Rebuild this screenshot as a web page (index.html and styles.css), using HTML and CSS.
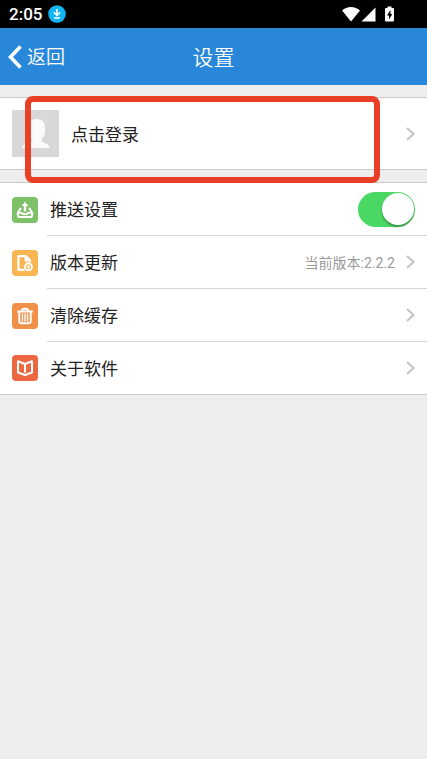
FILE: index.html
```html
<!DOCTYPE html>
<html lang="zh-CN">
<head>
<meta charset="utf-8">
<meta name="viewport" content="width=device-width, initial-scale=1">
<title>设置</title>
<link rel="stylesheet" href="styles.css">
</head>
<body>
<div class="status">
  <span class="clock">2:05</span>
  <svg class="download" viewBox="0 0 18 18" width="18" height="18" aria-hidden="true"><circle cx="9" cy="9" r="8.8" fill="#12b5f5"/><path d="M9 4v6M5.800 7.200 9 10.400l3.200-3.200M6 13h6" fill="none" stroke="#fff" stroke-width="1.600"/></svg>
  <svg class="signals" viewBox="0 0 54 18" width="54" height="18" aria-hidden="true">
    <path d="M1 5.500C6 .8 14 .8 19 5.500L10 16.500z" fill="#fff"/>
    <path d="M34.500 2.500v14H20.500z" fill="#fff"/>
    <path d="M46.500 1.500h4v1.500h1.500q1 0 1 1v11.500q0 1-1 1h-7q-1 0-1-1V4q0-1 1-1h1.500z" fill="#fff"/>
    <path d="M49.500 5 46 10.500h2V14.500l3.300-5.500h-1.800z" fill="#000"/>
  </svg>
</div>
<header class="header">
  <button class="back" type="button"><svg viewBox="0 0 14 24" width="14" height="24" aria-hidden="true"><path d="M12.500 1.500 2.500 12l10 10.500" fill="none" stroke="#fff" stroke-width="3.600"/></svg><span class="back-text">返回</span></button>
  <h1 class="title">设置</h1>
</header>
<main class="content">
  <section class="panel account">
    <a class="login" href="#login">
      <svg class="avatar" viewBox="0 0 47 47" width="47" height="47" aria-hidden="true"><rect width="47" height="47" rx="1" fill="#d8d8d8"/><path d="M10 38c.5-3 3-4.500 8-6 2-.6 2.300-2.500 1.300-4-1.500-2-2.300-4-2.300-7C16 13 19 9 24.500 9c6 0 8.500 3.500 8.300 8.500 0 1.500.7 3 .2 5-.3 2.500-1.500 4.500-3 6-.6 2-.3 3.200 1.500 3.900 4 1.300 5.500 2.300 6 5.600z" fill="#fafafa"/></svg>
      <span class="label">点击登录</span>
      <svg class="chevron" viewBox="0 0 9 14" width="9" height="14" aria-hidden="true"><path d="M1 1l6.500 6L1 13"/></svg>
    </a>
    <div class="marker"></div>
  </section>
  <ul class="panel list">
    <li class="item">
      <svg class="icon" viewBox="0 0 26 26" width="26" height="26" aria-hidden="true"><rect width="26" height="26" rx="4" fill="#7fc169"/><path d="M9.300 11.300 8 12Q5.700 15 5.700 17.200q0 2.900 2.600 2.900h9.400q2.600 0 2.600-2.900 0-2.200-2.300-5.200l-1.300-.7M6.500 15.800h3q.8 1.500 3.500 1.500t3.500-1.500h3" fill="none" stroke="#fff" stroke-width="2" stroke-linejoin="round"/><path d="M13 14.500V8" stroke="#fff" stroke-width="2.400"/><path d="M13 4.800 16.500 9h-7z" fill="#fff"/></svg>
      <label class="row" for="push"><span class="label">推送设置</span><input class="switch" id="push" type="checkbox" role="switch" checked></label>
    </li>
    <li class="item">
      <svg class="icon" viewBox="0 0 26 26" width="26" height="26" aria-hidden="true"><rect width="26" height="26" rx="4" fill="#f8b551"/><path d="M12.500 19.800H6.400V6.200h7.600l4 4V12" fill="none" stroke="#fff" stroke-width="2.200" stroke-linejoin="round"/><path d="M12.500 5.500V11.500h6z" fill="#fff"/><circle cx="16.500" cy="16.800" r="3.500" fill="#f8b551" stroke="#fff" stroke-width="1.900"/><path d="M16.500 15v3.600M14.700 16.800h3.600" stroke="#fff" stroke-width="1.200"/></svg>
      <a class="row" href="#update"><span class="label">版本更新</span><span class="version">当前版本:2.2.2</span><svg class="chevron" viewBox="0 0 9 14" width="9" height="14" aria-hidden="true"><path d="M1 1l6.500 6L1 13"/></svg></a>
    </li>
    <li class="item">
      <svg class="icon" viewBox="0 0 26 26" width="26" height="26" aria-hidden="true"><rect width="26" height="26" rx="4" fill="#f19149"/><g fill="none" stroke="#fff"><path d="M5.200 8.500h15.600M9.800 8V7.300q0-1.500 3.200-1.500T16.200 7.300V8" stroke-width="2"/><path d="M7.300 9v9q0 2.200 2.200 2.200h7q2.200 0 2.200-2.200V9" stroke-width="2"/><path d="M10.500 10.500v8M13 10.500v8M15.500 10.500v8" stroke-width="1.300"/></g></svg>
      <a class="row" href="#cache"><span class="label">清除缓存</span><svg class="chevron" viewBox="0 0 9 14" width="9" height="14" aria-hidden="true"><path d="M1 1l6.500 6L1 13"/></svg></a>
    </li>
    <li class="item">
      <svg class="icon" viewBox="0 0 26 26" width="26" height="26" aria-hidden="true"><rect width="26" height="26" rx="4" fill="#eb6841"/><path d="M13 9 6 6.300v11.200l7 2.500 7-2.500V6.300zv8.500" fill="none" stroke="#fff" stroke-width="2" stroke-linejoin="round"/></svg>
      <a class="row" href="#about"><span class="label">关于软件</span><svg class="chevron" viewBox="0 0 9 14" width="9" height="14" aria-hidden="true"><path d="M1 1l6.500 6L1 13"/></svg></a>
    </li>
  </ul>
</main>
</body>
</html>
```
FILE: styles.css
```css
* {
  box-sizing: border-box;
}

body {
  margin: 0;
  min-height: 100vh;
  background: #ededed;
  color: #222;
  font-family: Roboto, "Noto Sans CJK SC", sans-serif;
  font-size: 17px;
}

a {
  color: inherit;
  text-decoration: none;
}

.status {
  display: flex;
  align-items: center;
  gap: 6px;
  height: 28px;
  padding: 0 32px 0 9px;
  background: #000;
  color: #fff;
}

.clock {
  font-weight: 500;
}

.signals {
  margin-left: auto;
}

.header {
  display: grid;
  grid-template-columns: 1fr auto 1fr;
  align-items: center;
  height: 57px;
  padding: 0 8px;
  background: #2887d8;
  color: #fff;
}

.back {
  display: flex;
  align-items: center;
  justify-self: start;
  gap: 5px;
  padding: 0;
  border: 0;
  background: none;
  color: inherit;
  font-family: inherit;
  font-size: 19px;
  font-weight: 350;
  line-height: 24px;
}

.title {
  margin: 0;
  font-size: 21px;
  font-weight: 350;
  line-height: 28px;
}

.back-text,
.title,
.label {
  padding-top: 2px;
}

.content {
  display: grid;
  gap: 12px;
  padding-top: 12px;
}

.panel {
  margin: 0;
  padding: 0;
  border: solid #cbcbcb;
  border-width: 1px 0;
  background: #fff;
}

.account {
  position: relative;
}

.login {
  display: flex;
  align-items: center;
  gap: 12px;
  padding: 12px;
}

.label {
  margin-right: auto;
  line-height: 24px;
}

.chevron {
  flex: none;
  fill: none;
  stroke: #c3c3c3;
  stroke-width: 2;
}

.marker {
  position: absolute;
  inset: -2px 47px -14px 25px;
  border: 6px solid #e83f26;
  border-radius: 8px;
  pointer-events: none;
}

.list {
  list-style: none;
}

.item {
  display: flex;
  align-items: center;
  gap: 9px;
  padding-left: 12px;
}

.icon {
  flex: none;
}

.row {
  display: flex;
  flex: 1;
  align-items: center;
  gap: 11px;
  height: 53px;
  padding: 0 12px 0 3px;
  border-bottom: 1px solid #d4d4d4;
}

.item:last-child .row {
  height: 52px;
  border-bottom: 0;
}

.version {
  color: #999;
  font-size: 14px;
}

.switch {
  display: flex;
  align-items: center;
  justify-content: flex-end;
  width: 57px;
  height: 35px;
  margin: 0;
  padding: 1px;
  border-radius: 18px;
  background: #4bd763;
  appearance: none;
}

.switch::before {
  width: 32px;
  height: 32px;
  border-radius: 50%;
  background: #fff;
  box-shadow: 0 2px 2px rgb(0 0 0 / 30%);
  content: "";
}

.switch:not(:checked) {
  justify-content: flex-start;
  background: #ddd;
}
```
